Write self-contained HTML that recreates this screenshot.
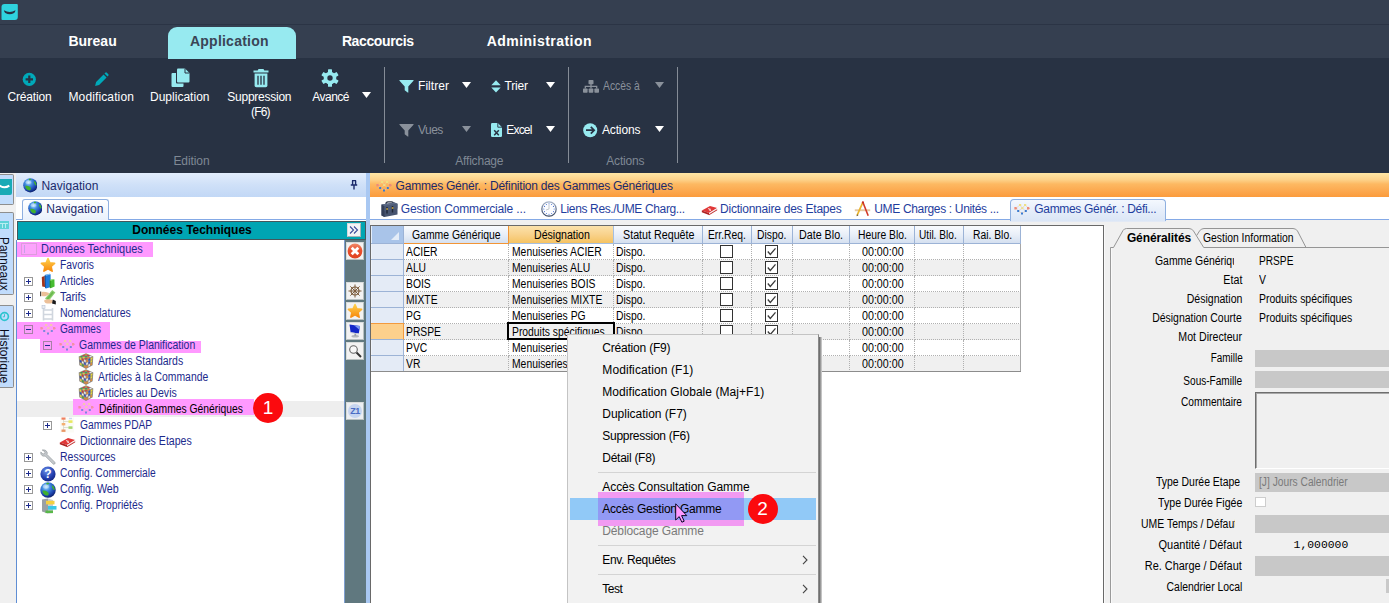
<!DOCTYPE html><html lang="fr"><head><meta charset="utf-8"><title>Gammes Génériques</title><style>
*{box-sizing:border-box;margin:0;padding:0}
html,body{width:1389px;height:603px;overflow:hidden;background:#fff}
body{position:relative;font-family:"Liberation Sans",sans-serif;font-size:12px;color:#000}
.a{position:absolute}
.t{position:absolute;white-space:nowrap}
.t span{display:inline-block;white-space:nowrap}
.sep{position:absolute;top:67px;height:96px;width:1px;background:#858c97}
.hl{position:absolute;background:#ff99ff}
.pm{position:absolute;width:9px;height:9px;border:1px solid #989898;background:#fff}
.pm:before{content:"";position:absolute;left:1px;top:3px;width:5px;height:1px;background:#1c2a8c}
.pm.m{background:#fb9dfb;border-color:#a680a6}
.pm.p:after{content:"";position:absolute;left:3px;top:1px;width:1px;height:5px;background:#1c2a8c}
.gh{position:absolute;top:226px;height:18px;border-right:1px solid #9cb3d6;border-bottom:1px solid #9cb3d6;background:linear-gradient(#f9fbfe,#e9eff8 50%,#d5e0f0)}
.gc{position:absolute;height:16px;border-right:1px dotted #b0b0b0;border-bottom:1px dotted #b0b0b0}
.rh{position:absolute;left:371px;width:33px;height:16px;box-shadow:inset 1px 0 0 #eff4fb;background:#e4ebf6;border-right:1px solid #9cb3d6;border-bottom:1px solid #9cb3d6}
.cb{position:absolute;width:13px;height:13px;border:1px solid #333;background:#fff}
.ff{position:absolute;left:1255px;width:134px;background:#c8c8c8}
.tbb{position:absolute;left:346px;width:18px;height:18px;background:#f2f2f2;border:1px solid #d8dcdc;border-right-color:#b8c0c0;border-bottom-color:#b8c0c0}
</style></head><body>
<div class="a" style="left:0;top:0;width:1389px;height:58px;background:#353f50"></div>
<div class="a" style="left:0;top:24px;width:1389px;height:1px;background:#2b3445"></div>
<div class="a" style="left:0;top:58px;width:1389px;height:115px;background:#283243"></div>
<svg class="a" style="left:1px;top:4px" width="18" height="17" viewBox="0 0 18 17"><g transform="translate(.5 0)"><path d="M3 0H15.3Q16.3 0 16.3 1V13Q16.3 16 13.3 16H1Q0 16 0 15V3Q0 0 3 0Z" fill="#2fd3df"/><path d="M2.4 6.2Q8.2 9.6 14 6.2Q13.6 8.2 12.6 8.9Q8.2 11.8 3.8 8.9Q2.8 8.2 2.4 6.2Z" fill="#283243"/></g></svg>
<div class="a" style="left:168px;top:27px;width:128px;height:32px;background:#97eaf0;border-radius:9px 9px 0 0"></div>
<div class="t" style="left:68.40px;top:33px;height:16px;line-height:16px;font-size:14px;font-weight:bold;color:#fff;"><span style="letter-spacing:0.011px;">Bureau</span></div>
<div class="t" style="left:190.00px;top:33px;height:16px;line-height:16px;font-size:14px;font-weight:bold;color:#3a4556;"><span style="letter-spacing:0.225px;">Application</span></div>
<div class="t" style="left:341.90px;top:33px;height:16px;line-height:16px;font-size:14px;font-weight:bold;color:#fff;"><span style="letter-spacing:-0.378px;">Raccourcis</span></div>
<div class="t" style="left:486.80px;top:33px;height:16px;line-height:16px;font-size:14px;font-weight:bold;color:#fff;"><span style="letter-spacing:0.451px;">Administration</span></div>
<div class="t" style="left:7.50px;top:90px;height:14px;line-height:14px;font-size:12px;color:#fff;"><span style="letter-spacing:-0.170px;">Création</span></div>
<div class="t" style="left:68.50px;top:90px;height:14px;line-height:14px;font-size:12px;color:#fff;"><span style="letter-spacing:0.122px;">Modification</span></div>
<div class="t" style="left:150.00px;top:90px;height:14px;line-height:14px;font-size:12px;color:#fff;"><span style="letter-spacing:0.012px;">Duplication</span></div>
<div class="t" style="left:227.30px;top:90px;height:14px;line-height:14px;font-size:12px;color:#fff;"><span style="letter-spacing:-0.247px;">Suppression</span></div>
<div class="t" style="left:251.00px;top:105px;height:14px;line-height:14px;font-size:12px;color:#fff;"><span style="letter-spacing:-0.849px;">(F6)</span></div>
<div class="t" style="left:312.30px;top:90px;height:14px;line-height:14px;font-size:12px;color:#fff;"><span style="letter-spacing:-0.518px;">Avancé</span></div>
<svg class="a" style="left:22px;top:72px" width="15" height="15" viewBox="0 0 15 15"><circle cx="7.3" cy="7.3" r="6.6" fill="#00a9b9"/><path d="M7.3 3.6V11M3.6 7.3H11" stroke="#283243" stroke-width="2.2"/></svg>
<svg class="a" style="left:93.5px;top:72px" width="15" height="15" viewBox="0 0 16 16"><path d="M1.2 14.8L2.2 10.6L10.2 2.6L13.4 5.8L5.4 13.8Z M11.2 1.6L12.3 0.6Q13 0 13.7 0.7L15.3 2.3Q16 3 15.4 3.7L14.4 4.8Z" fill="#00a9b9"/></svg>
<svg class="a" style="left:171px;top:68px" width="19" height="20" viewBox="0 0 19 20"><path d="M7 0.5H14L18.5 5V13.5Q18.5 14.5 17.5 14.5H7Q6 14.5 6 13.5V1.5Q6 0.5 7 0.5Z" fill="#97eaf0"/><path d="M14 0.5V5H18.5" fill="none" stroke="#283243" stroke-width="1"/><path d="M1.5 5H5V14.5Q5 15.5 6 15.5H12.5V18Q12.5 19 11.5 19H1.5Q0.5 19 0.5 18V6Q0.5 5 1.5 5Z" fill="#97eaf0"/></svg>
<svg class="a" style="left:252px;top:68px" width="18" height="20" viewBox="0 0 18 20"><path d="M6.5 1H11.5L12.3 2.4H16.5V4.4H1.5V2.4H5.7Z" fill="#97eaf0"/><path d="M2.6 5.6H15.4V17.5Q15.4 19.2 13.7 19.2H4.3Q2.6 19.2 2.6 17.5Z" fill="#97eaf0"/><path d="M6 7.8V16.8M9 7.8V16.8M12 7.8V16.8" stroke="#283243" stroke-width="1.3"/></svg>
<svg class="a" style="left:321px;top:69px" width="18" height="18" viewBox="0 0 18 18"><g transform="translate(9 9)" fill="#97eaf0"><circle r="6.3"/><rect x="-2" y="-8.8" width="4" height="5" rx=".6" transform="rotate(0)"/><rect x="-2" y="-8.8" width="4" height="5" rx=".6" transform="rotate(60)"/><rect x="-2" y="-8.8" width="4" height="5" rx=".6" transform="rotate(120)"/><rect x="-2" y="-8.8" width="4" height="5" rx=".6" transform="rotate(180)"/><rect x="-2" y="-8.8" width="4" height="5" rx=".6" transform="rotate(240)"/><rect x="-2" y="-8.8" width="4" height="5" rx=".6" transform="rotate(300)"/><circle r="2.7" fill="#283243"/></g></svg>
<svg class="a" style="left:362px;top:92px" width="9" height="6" viewBox="0 0 9 6"><path d="M0 0H9L4.5 6Z" fill="#fff"/></svg>
<div class="sep" style="left:384px"></div>
<div class="sep" style="left:568px"></div>
<div class="sep" style="left:677px"></div>
<div class="t" style="left:173.40px;top:154px;height:14px;line-height:14px;font-size:12px;color:#7f8894;"><span style="letter-spacing:-0.085px;">Edition</span></div>
<div class="t" style="left:455.30px;top:154px;height:14px;line-height:14px;font-size:12px;color:#7f8894;"><span style="letter-spacing:-0.202px;">Affichage</span></div>
<div class="t" style="left:606.30px;top:154px;height:14px;line-height:14px;font-size:12px;color:#7f8894;"><span style="letter-spacing:-0.193px;">Actions</span></div>
<div class="t" style="left:418.00px;top:79px;height:14px;line-height:14px;font-size:12px;color:#fff;"><span style="letter-spacing:0.048px;">Filtrer</span></div>
<div class="t" style="left:504.40px;top:79px;height:14px;line-height:14px;font-size:12px;color:#fff;"><span style="letter-spacing:-0.124px;">Trier</span></div>
<div class="t" style="left:603.00px;top:79px;height:14px;line-height:14px;font-size:12px;color:#8a919b;"><span style="transform:scaleX(0.8598);transform-origin:0 50%">Accès à</span></div>
<div class="t" style="left:418.00px;top:123px;height:14px;line-height:14px;font-size:12px;color:#8a919b;"><span style="letter-spacing:-0.552px;">Vues</span></div>
<div class="t" style="left:506.30px;top:123px;height:14px;line-height:14px;font-size:12px;color:#fff;"><span style="letter-spacing:-0.809px;">Excel</span></div>
<div class="t" style="left:601.90px;top:123px;height:14px;line-height:14px;font-size:12px;color:#fff;"><span style="letter-spacing:-0.122px;">Actions</span></div>
<svg class="a" style="left:462px;top:82px" width="9" height="6" viewBox="0 0 9 6"><path d="M0 0H9L4.5 6Z" fill="#fff"/></svg>
<svg class="a" style="left:546px;top:82px" width="9" height="6" viewBox="0 0 9 6"><path d="M0 0H9L4.5 6Z" fill="#fff"/></svg>
<svg class="a" style="left:655px;top:82px" width="9" height="6" viewBox="0 0 9 6"><path d="M0 0H9L4.5 6Z" fill="#8a919b"/></svg>
<svg class="a" style="left:462px;top:126px" width="9" height="6" viewBox="0 0 9 6"><path d="M0 0H9L4.5 6Z" fill="#8a919b"/></svg>
<svg class="a" style="left:546px;top:126px" width="9" height="6" viewBox="0 0 9 6"><path d="M0 0H9L4.5 6Z" fill="#fff"/></svg>
<svg class="a" style="left:655px;top:126px" width="9" height="6" viewBox="0 0 9 6"><path d="M0 0H9L4.5 6Z" fill="#fff"/></svg>
<svg class="a" style="left:399px;top:80px" width="15" height="13" viewBox="0 0 15 13"><path d="M0.8 0H14.2Q15 0 14.5 0.8L9.3 6.5V12.3Q9.3 13 8.7 12.6L6 10.6Q5.7 10.4 5.7 10V6.5L0.5 0.8Q0 0 0.8 0Z" fill="#97eaf0"/></svg>
<svg class="a" style="left:399px;top:124px" width="15" height="13" viewBox="0 0 15 13"><path d="M0.8 0H14.2Q15 0 14.5 0.8L9.3 6.5V12.3Q9.3 13 8.7 12.6L6 10.6Q5.7 10.4 5.7 10V6.5L0.5 0.8Q0 0 0.8 0Z" fill="#8a919b"/></svg>
<svg class="a" style="left:491px;top:80px" width="10" height="13" viewBox="0 0 10 13"><path d="M0.3 5.3L5 0.3L9.7 5.3ZM0.3 7.5L5 12.5L9.7 7.5Z" fill="#97eaf0"/></svg>
<svg class="a" style="left:583px;top:80px" width="16" height="13" viewBox="0 0 16 13"><g fill="#8a919b"><rect x="5.5" y="0" width="5" height="4.2" rx=".7"/><rect x="0" y="8.6" width="4.6" height="4.2" rx=".7"/><rect x="5.7" y="8.6" width="4.6" height="4.2" rx=".7"/><rect x="11.4" y="8.6" width="4.6" height="4.2" rx=".7"/></g><path d="M8 4V8.6M2.3 8.6V6.4H13.7V8.6" fill="none" stroke="#8a919b" stroke-width="1.3"/></svg>
<svg class="a" style="left:491px;top:123px" width="11" height="14" viewBox="0 0 11 14"><path d="M1.2 0H6.8L11 4.2V12.8Q11 14 9.8 14H1.2Q0 14 0 12.8V1.2Q0 0 1.2 0Z" fill="#97eaf0"/><path d="M6.8 0V4.2H11" fill="none" stroke="#283243" stroke-width=".9"/><path d="M3.2 7.2L7.8 12.2M7.8 7.2L3.2 12.2" stroke="#283243" stroke-width="1.5"/></svg>
<svg class="a" style="left:583px;top:123px" width="15" height="15" viewBox="0 0 15 15"><circle cx="7.2" cy="7.2" r="7" fill="#97eaf0"/><path d="M3 7.2H11M7.8 3.8L11.2 7.2L7.8 10.6" fill="none" stroke="#283243" stroke-width="1.7"/></svg>
<div class="a" style="left:0;top:173px;width:370px;height:430px;background:#a9c8f2"></div>
<div class="a" style="left:0;top:173px;width:16px;height:430px;background:#f0f0f0"></div>
<div class="a" style="left:0;top:174px;width:14px;height:31px;background:#c1dcfc;border:1px solid #8e8e8e;border-left:0;border-radius:0 2px 2px 0"></div>
<div class="a" style="left:0;top:179px;width:12px;height:16px;background:#18aab6;border-radius:0 0 2px 0"></div>
<svg class="a" style="left:0;top:179px" width="12" height="16"><path d="M-0.5 6.6Q4.5 10 9.3 6.6" stroke="#fff" stroke-width="2" fill="none"/></svg>
<div class="a" style="left:0;top:212px;width:14px;height:83px;background:#c1dcfc;border:1px solid #8e8e8e;border-left:0;border-radius:0 2px 2px 0"></div>
<div class="a" style="left:0;top:305px;width:14px;height:83px;background:#c1dcfc;border:1px solid #8e8e8e;border-left:0;border-radius:0 2px 2px 0"></div>
<div class="a" style="left:0;top:221px;width:9px;height:8px;background:#5fd2d8"></div><div class="a" style="left:0;top:223px;width:8px;height:1px;background:#b8eef0"></div><div class="a" style="left:2px;top:224px;width:1px;height:4px;background:#b8eef0"></div><div class="a" style="left:5px;top:224px;width:1px;height:4px;background:#b8eef0"></div>
<div class="t" style="left:10.6px;top:237.4px;transform:rotate(90deg) scaleX(0.9154);transform-origin:0 0;color:#080a18;font-size:13px;line-height:13px;height:13px">Panneaux</div>
<svg class="a" style="left:0;top:311px" width="10" height="11" viewBox="0 0 10 11"><circle cx="4.5" cy="5.5" r="3.9" fill="none" stroke="#2fc4cf" stroke-width="1.7"/><path d="M4.5 3.2V5.8H2.8" fill="none" stroke="#2fc4cf" stroke-width="1"/></svg>
<div class="t" style="left:10.6px;top:328.7px;transform:rotate(90deg) scaleX(0.9278);transform-origin:0 0;color:#080a18;font-size:13px;line-height:13px;height:13px">Historique</div>
<div class="a" style="left:16px;top:173px;width:350px;height:430px;background:#fff"></div><div class="a" style="left:16px;top:240px;width:1px;height:363px;background:#5f8ed4"></div>
<div class="a" style="left:16px;top:173px;width:350px;height:24px;background:linear-gradient(#e2edfc,#cfe0f8 50%,#c2d8f6)"></div>
<div class="t" style="left:41.40px;top:179px;height:14px;line-height:14px;font-size:12px;color:#1b2a6b;"><span style="letter-spacing:0.040px;">Navigation</span></div>
<div class="a" style="left:16px;top:219px;width:350px;height:1px;background:#84a9e6"></div>
<div class="a" style="left:22px;top:199px;width:87px;height:21px;background:linear-gradient(#fff,#e9f1fc);border:1px solid #8fb0e0;border-bottom:0;border-radius:3px 3px 0 0"></div>
<div class="t" style="left:46.20px;top:202px;height:14px;line-height:14px;font-size:12px;color:#1b2a6b;"><span style="letter-spacing:0.060px;">Navigation</span></div>
<svg class="a" style="left:22.7px;top:178.4px" width="14.6" height="14.6" viewBox="0 0 14 14"><defs><radialGradient id="gg1" cx=".38" cy=".3" r=".75"><stop offset="0" stop-color="#b8e4ff"/><stop offset=".35" stop-color="#3f8ae0"/><stop offset=".75" stop-color="#1a3fa8"/><stop offset="1" stop-color="#0a1c60"/></radialGradient></defs><circle cx="7" cy="7" r="6.8" fill="url(#gg1)"/><path d="M5.5 0.8Q7.5 0.3 8.2 1.2Q7.2 2.6 5.8 2.2ZM10.8 2.6Q12.8 4 13 6.8Q12 7.8 11.3 6Q10 4.2 10.8 2.6ZM2.2 7.5Q4.5 7 6.5 8.5Q8.5 10 7 11.8Q5 12.3 3.2 10.6Q2 9 2.2 7.5Z" fill="#3fb02e"/><ellipse cx="5.2" cy="4" rx="2.6" ry="1.8" fill="#fff" opacity=".35"/></svg>
<svg class="a" style="left:27.8px;top:201.3px" width="14.6" height="14.6" viewBox="0 0 14 14"><defs><radialGradient id="gg2" cx=".38" cy=".3" r=".75"><stop offset="0" stop-color="#b8e4ff"/><stop offset=".35" stop-color="#3f8ae0"/><stop offset=".75" stop-color="#1a3fa8"/><stop offset="1" stop-color="#0a1c60"/></radialGradient></defs><circle cx="7" cy="7" r="6.8" fill="url(#gg2)"/><path d="M5.5 0.8Q7.5 0.3 8.2 1.2Q7.2 2.6 5.8 2.2ZM10.8 2.6Q12.8 4 13 6.8Q12 7.8 11.3 6Q10 4.2 10.8 2.6ZM2.2 7.5Q4.5 7 6.5 8.5Q8.5 10 7 11.8Q5 12.3 3.2 10.6Q2 9 2.2 7.5Z" fill="#3fb02e"/><ellipse cx="5.2" cy="4" rx="2.6" ry="1.8" fill="#fff" opacity=".35"/></svg>
<svg class="a" style="left:350px;top:180px" width="8" height="10" viewBox="0 0 8 10"><path d="M2 0.5H6M2.6 0.5V5M5.6 0.5V5M0.8 5H7.2M4 5V9.5" stroke="#1b2a6b" stroke-width="1.4" fill="none"/></svg>
<div class="a" style="left:17px;top:221px;width:349px;height:19px;background:#00a5b3;border:1px solid #46575b"></div>
<div class="t" style="left:42.00px;width:300px;text-align:center;top:223px;height:14px;line-height:14px;font-size:12px;font-weight:bold;color:#000;"><span style="letter-spacing:-0.022px;">Données Techniques</span></div>
<div class="a" style="left:347px;top:223px;width:14px;height:14px;background:#f2f4f6;border:1px solid #d4dadc;border-right-color:#a8b4b6;border-bottom-color:#a8b4b6"></div>
<svg class="a" style="left:349px;top:226px" width="10" height="8" viewBox="0 0 10 8"><path d="M1 0.5L4.5 4L1 7.5M5 0.5L8.5 4L5 7.5" fill="none" stroke="#3a4a9a" stroke-width="1.1"/></svg>
<div class="a" style="left:344px;top:240px;width:22px;height:363px;background:#60787f"></div>
<div class="a" style="left:344px;top:240px;width:1px;height:363px;background:#7f9fd0"></div>
<div class="tbb" style="top:242px"></div><svg class="a" style="left:347px;top:243px" width="16" height="16" viewBox="0 0 16 16"><defs><linearGradient id="xg" x1="0" y1="0" x2="0" y2="1"><stop offset="0" stop-color="#f08a6a"/><stop offset=".45" stop-color="#e8502e"/><stop offset="1" stop-color="#e04422"/></linearGradient></defs><circle cx="8" cy="8" r="7.4" fill="url(#xg)"/><path d="M4.7 4.7L11.3 11.3M11.3 4.7L4.7 11.3" stroke="#fff" stroke-width="2.8"/></svg>
<div class="tbb" style="top:282px"></div><svg class="a" style="left:348px;top:284px" width="14" height="14" viewBox="0 0 14 14"><circle cx="7" cy="7" r="4" fill="none" stroke="#7a5a3a" stroke-width="1.2"/><path d="M7 0.5V13.5M0.5 7H13.5M2.4 2.4L11.6 11.6M11.6 2.4L2.4 11.6" stroke="#7a5a3a" stroke-width="1"/></svg>
<div class="tbb" style="top:302px"></div><svg class="a" style="left:347px;top:303px" width="16" height="16" viewBox="0 0 16 16"><defs><linearGradient id="sg2" x1="0" y1="0" x2="0" y2="1"><stop offset="0" stop-color="#ffd04a"/><stop offset="1" stop-color="#f78a0c"/></linearGradient></defs><path d="M8 1.6L9.9 5.9L14.6 6.4L11.1 9.5L12.1 14.1L8 11.7L3.9 14.1L4.9 9.5L1.4 6.4L6.1 5.9Z" fill="url(#sg2)" stroke="url(#sg2)" stroke-width="1.6" stroke-linejoin="round"/></svg>
<div class="tbb" style="top:322px"></div><svg class="a" style="left:348px;top:324px" width="14" height="14" viewBox="0 0 14 14"><path d="M1.5 0.5L12 2L10.8 9.6L2.6 8.2Z" fill="#1428c8"/><path d="M6 1.2L12 2L11.4 5.8Z" fill="#7a98f0"/><path d="M2.6 8.2L10.8 9.6L10.6 10.4L2.6 9Z" fill="#c8ccd4"/><ellipse cx="7.2" cy="12.2" rx="3.8" ry="1.3" fill="#b4b8bc"/><rect x="6.4" y="9.8" width="1.8" height="2" fill="#9ca0a8"/></svg>
<div class="tbb" style="top:342px"></div><svg class="a" style="left:348px;top:344px" width="14" height="14" viewBox="0 0 14 14"><circle cx="5.5" cy="5.5" r="3.8" fill="#f8f8f8" stroke="#666" stroke-width="1.1"/><path d="M8.5 8.5L13 13" stroke="#333" stroke-width="2"/></svg>
<div class="a" style="left:346px;top:402px;width:18px;height:18px;background:#eceef2;border:1px solid #d8dcdc;border-right-color:#b8c0c0;border-bottom-color:#b8c0c0"></div><div class="a" style="left:348px;top:404px;width:14px;height:14px;border-radius:50%;background:#c6d5f0"></div><div class="t" style="left:346px;top:405px;width:18px;text-align:center;font-size:9px;font-weight:bold;color:#4a6cc4;line-height:12px;letter-spacing:-.5px">Z1</div>
<div class="a" style="left:17px;top:401px;width:327px;height:16px;background:#eeeeee"></div>
<div class="hl" style="left:17px;top:242px;width:136px;height:15px"></div>
<div class="hl" style="left:17px;top:322px;width:93px;height:16.5px"></div>
<div class="hl" style="left:40px;top:338px;width:70px;height:4px"></div>
<div class="hl" style="left:40px;top:341px;width:161px;height:11.5px"></div>
<div class="hl" style="left:73px;top:399px;width:181px;height:16px"></div>
<div class="t" style="left:41.40px;top:242px;height:14px;line-height:14px;font-size:12px;color:#1c2a8c;"><span style="transform:scaleX(0.9100);transform-origin:0 50%">Données Techniques</span></div>
<div class="t" style="left:60.30px;top:258px;height:14px;line-height:14px;font-size:12px;color:#1c2a8c;"><span style="transform:scaleX(0.8617);transform-origin:0 50%">Favoris</span></div>
<div class="t" style="left:60.30px;top:274px;height:14px;line-height:14px;font-size:12px;color:#1c2a8c;"><span style="transform:scaleX(0.8617);transform-origin:0 50%">Articles</span></div>
<div class="pm p" style="left:24px;top:277px"></div>
<div class="t" style="left:60.30px;top:290px;height:14px;line-height:14px;font-size:12px;color:#1c2a8c;"><span style="transform:scaleX(0.9034);transform-origin:0 50%">Tarifs</span></div>
<div class="pm p" style="left:24px;top:293px"></div>
<div class="t" style="left:60.30px;top:306px;height:14px;line-height:14px;font-size:12px;color:#1c2a8c;"><span style="transform:scaleX(0.8785);transform-origin:0 50%">Nomenclatures</span></div>
<div class="pm p" style="left:24px;top:309px"></div>
<div class="t" style="left:60.30px;top:322px;height:14px;line-height:14px;font-size:12px;color:#1c2a8c;"><span style="transform:scaleX(0.8423);transform-origin:0 50%">Gammes</span></div>
<div class="pm m" style="left:24px;top:325px"></div>
<div class="t" style="left:79.30px;top:338px;height:14px;line-height:14px;font-size:12px;color:#1c2a8c;"><span style="transform:scaleX(0.8711);transform-origin:0 50%">Gammes de Planification</span></div>
<div class="pm m" style="left:43px;top:341px"></div>
<div class="t" style="left:98.00px;top:354px;height:14px;line-height:14px;font-size:12px;color:#1c2a8c;"><span style="transform:scaleX(0.8749);transform-origin:0 50%">Articles Standards</span></div>
<div class="t" style="left:98.00px;top:370px;height:14px;line-height:14px;font-size:12px;color:#1c2a8c;"><span style="transform:scaleX(0.8651);transform-origin:0 50%">Articles à la Commande</span></div>
<div class="t" style="left:98.00px;top:386px;height:14px;line-height:14px;font-size:12px;color:#1c2a8c;"><span style="transform:scaleX(0.8818);transform-origin:0 50%">Articles au Devis</span></div>
<div class="t" style="left:99.00px;top:402px;height:14px;line-height:14px;font-size:12px;color:#000;"><span style="transform:scaleX(0.8590);transform-origin:0 50%">Définition Gammes Génériques</span></div>
<div class="t" style="left:79.50px;top:418px;height:14px;line-height:14px;font-size:12px;color:#1c2a8c;"><span style="transform:scaleX(0.8525);transform-origin:0 50%">Gammes PDAP</span></div>
<div class="pm p" style="left:43px;top:421px"></div>
<div class="t" style="left:79.50px;top:434px;height:14px;line-height:14px;font-size:12px;color:#1c2a8c;"><span style="transform:scaleX(0.8821);transform-origin:0 50%">Dictionnaire des Etapes</span></div>
<div class="t" style="left:60.30px;top:450px;height:14px;line-height:14px;font-size:12px;color:#1c2a8c;"><span style="transform:scaleX(0.8760);transform-origin:0 50%">Ressources</span></div>
<div class="pm p" style="left:24px;top:453px"></div>
<div class="t" style="left:60.30px;top:466px;height:14px;line-height:14px;font-size:12px;color:#1c2a8c;"><span style="transform:scaleX(0.8550);transform-origin:0 50%">Config. Commerciale</span></div>
<div class="pm p" style="left:24px;top:469px"></div>
<div class="t" style="left:60.30px;top:482px;height:14px;line-height:14px;font-size:12px;color:#1c2a8c;"><span style="transform:scaleX(0.8934);transform-origin:0 50%">Config. Web</span></div>
<div class="pm p" style="left:24px;top:485px"></div>
<div class="t" style="left:60.30px;top:498px;height:14px;line-height:14px;font-size:12px;color:#1c2a8c;"><span style="transform:scaleX(0.8631);transform-origin:0 50%">Config. Propriétés</span></div>
<div class="pm p" style="left:24px;top:501px"></div>
<div class="a" style="left:21px;top:243px;width:16px;height:12px;border:1px solid #dc9cdc;background:#fca4fc"></div><div class="a" style="left:24px;top:245px;width:1px;height:8px;background:#c8a0e8"></div>
<svg class="a" style="left:40px;top:257px" width="16" height="16" viewBox="0 0 16 16"><defs><linearGradient id="sg" x1="0" y1="0" x2="0" y2="1"><stop offset="0" stop-color="#ffd04a"/><stop offset="1" stop-color="#f78a0c"/></linearGradient></defs><path d="M8 1.6L9.9 5.9L14.6 6.4L11.1 9.5L12.1 14.1L8 11.7L3.9 14.1L4.9 9.5L1.4 6.4L6.1 5.9Z" fill="url(#sg)" stroke="url(#sg)" stroke-width="1.6" stroke-linejoin="round"/></svg>
<svg class="a" style="left:40px;top:273px" width="16" height="16" viewBox="0 0 16 16"><path d="M1.8 4L4.6 3L5 14L2.2 13.4Z" fill="#a43418"/><path d="M4.6 3L5.6 3.2L6 14.6L5 14Z" fill="#7a2410"/><path d="M4.8 2L9.6 0.8L10.6 1.4L10.8 14L6 15.4L5 14.6Z" fill="#1f7cdc"/><path d="M4.8 2L9.6 0.8L10.6 1.4L5.8 2.8Z" fill="#8cc4f4"/><path d="M4.8 2L5.8 2.8L6 15.4L5 14.6Z" fill="#1458a8"/><path d="M9.8 7L13.6 6L14.4 6.6L14.6 13.6L10.6 15.2L9.8 14.4Z" fill="#46bc30"/><path d="M9.8 7L13.6 6L14.4 6.6L10.6 7.8Z" fill="#a4e48c"/><path d="M9.8 7L10.6 7.8V15.2L9.8 14.4Z" fill="#2a8a1c"/></svg>
<svg class="a" style="left:39px;top:289px" width="18" height="16" viewBox="0 0 18 16"><path d="M6 9.6L13.2 1L16.4 3.6L9.4 12.2Z" fill="#8cd070"/><path d="M7.6 9.4L13.4 2.6L14.8 3.8L9.2 10.6Z" fill="#6cb850"/><path d="M1.2 2.4H2.2V7.2H1.2Z" fill="#1a1a1a"/><path d="M2.4 3Q5.6 2.4 9.6 3.8Q10.6 5 9.6 5.8Q8 6.6 6.4 7.2Q4 7.6 2.4 6.8Z" fill="#ecc098"/><path d="M5.4 11Q8.4 9.6 11.8 10.6L14 11.6L13.2 14Q9.6 15 6.4 14Q4.6 12.6 5.4 11Z" fill="#ecc098"/><path d="M13.8 10.6L16.8 12V15.4L13 14.6Z" fill="#1a1a1a"/></svg>
<svg class="a" style="left:40px;top:305px" width="16" height="16" viewBox="0 0 16 16"><path d="M3.5 1V15.5M12.5 3V15.5M3.5 5H12.5M3.5 9.5H12.5M3.5 14H12.5" fill="none" stroke="#d0d6de" stroke-width="1.6"/><rect x="2" y="0.5" width="3" height="3" fill="#e8ecf2" stroke="#b8c4d4" stroke-width=".6"/></svg>
<svg class="a" style="left:40px;top:324px;opacity:0.65" width="16" height="11" viewBox="0 0 16 11"><path d="M2 4.2L6 1L8.3 4.2L11 1L14.5 4.2L11.8 7L8 9.5L4.2 7ZM4.2 7L8.3 4.2L11.8 7" fill="none" stroke="#ecc9a6" stroke-width=".6"/><path d="M0.4 3.1H2.2L3.3 4.2L2.2 5.4H0.4Z" fill="#ee8c78"/><path d="M13 3.1H14.8L15.9 4.2L14.8 5.4H13Z" fill="#ee8c78"/><rect x="5" y="0" width="2.2" height="2" fill="#f0e084"/><rect x="10" y="0" width="2.2" height="2" fill="#f0e084"/><rect x="7.2" y="3.2" width="2.2" height="1.9" fill="#ece08c"/><rect x="3.2" y="6" width="2" height="2" fill="#3a7ad0"/><rect x="10.8" y="6" width="2" height="2" fill="#3a7ad0"/><rect x="7" y="8.5" width="2" height="2" fill="#3a7ad0"/></svg>
<svg class="a" style="left:59px;top:340px;opacity:0.65" width="16" height="11" viewBox="0 0 16 11"><path d="M2 4.2L6 1L8.3 4.2L11 1L14.5 4.2L11.8 7L8 9.5L4.2 7ZM4.2 7L8.3 4.2L11.8 7" fill="none" stroke="#ecc9a6" stroke-width=".6"/><path d="M0.4 3.1H2.2L3.3 4.2L2.2 5.4H0.4Z" fill="#ee8c78"/><path d="M13 3.1H14.8L15.9 4.2L14.8 5.4H13Z" fill="#ee8c78"/><rect x="5" y="0" width="2.2" height="2" fill="#f0e084"/><rect x="10" y="0" width="2.2" height="2" fill="#f0e084"/><rect x="7.2" y="3.2" width="2.2" height="1.9" fill="#ece08c"/><rect x="3.2" y="6" width="2" height="2" fill="#3a7ad0"/><rect x="10.8" y="6" width="2" height="2" fill="#3a7ad0"/><rect x="7" y="8.5" width="2" height="2" fill="#3a7ad0"/></svg>
<svg class="a" style="left:78px;top:403px;opacity:0.65" width="16" height="11" viewBox="0 0 16 11"><path d="M2 4.2L6 1L8.3 4.2L11 1L14.5 4.2L11.8 7L8 9.5L4.2 7ZM4.2 7L8.3 4.2L11.8 7" fill="none" stroke="#ecc9a6" stroke-width=".6"/><path d="M0.4 3.1H2.2L3.3 4.2L2.2 5.4H0.4Z" fill="#ee8c78"/><path d="M13 3.1H14.8L15.9 4.2L14.8 5.4H13Z" fill="#ee8c78"/><rect x="5" y="0" width="2.2" height="2" fill="#f0e084"/><rect x="10" y="0" width="2.2" height="2" fill="#f0e084"/><rect x="7.2" y="3.2" width="2.2" height="1.9" fill="#ece08c"/><rect x="3.2" y="6" width="2" height="2" fill="#3a7ad0"/><rect x="10.8" y="6" width="2" height="2" fill="#3a7ad0"/><rect x="7" y="8.5" width="2" height="2" fill="#3a7ad0"/></svg>
<svg class="a" style="left:78px;top:353px" width="16" height="16" viewBox="0 0 16 16"><path d="M8 0.2L15.3 3.4L14.7 12.3L8 16L1.3 12.3L0.7 3.4Z" fill="#8f8880"/><path d="M1.93 3.62L3.47 2.93L5.01 3.66L3.47 4.36Z" fill="#3aa83a"/><path d="M4.19 2.61L5.73 1.93L7.27 2.63L5.73 3.33Z" fill="#d83a30"/><path d="M6.46 1.60L8.00 0.92L9.54 1.60L8.00 2.30Z" fill="#ee8a2a"/><path d="M4.19 4.71L5.73 4.00L7.27 4.73L5.73 5.45Z" fill="#e8dc30"/><path d="M6.46 3.67L8.00 2.96L9.54 3.67L8.00 4.39Z" fill="#3aa83a"/><path d="M8.73 2.63L10.27 1.93L11.81 2.61L10.27 3.33Z" fill="#d83a30"/><path d="M6.46 5.80L8.00 5.08L9.54 5.80L8.00 6.55Z" fill="#d83a30"/><path d="M8.73 4.73L10.27 4.00L11.81 4.71L10.27 5.45Z" fill="#ee8a2a"/><path d="M10.99 3.66L12.53 2.93L14.07 3.62L12.53 4.36Z" fill="#f2f2f4"/><path d="M1.59 4.22L3.13 4.98L3.22 6.90L1.72 6.13Z" fill="#e8dc30"/><path d="M3.85 5.33L5.38 6.08L5.44 8.03L3.93 7.26Z" fill="#d83a30"/><path d="M6.10 6.44L7.64 7.19L7.65 9.16L6.14 8.39Z" fill="#f2f2f4"/><path d="M1.78 7.03L3.27 7.80L3.37 9.73L1.91 8.94Z" fill="#2c4cc8"/><path d="M3.97 8.17L5.46 8.94L5.51 10.89L4.06 10.10Z" fill="#f2f2f4"/><path d="M6.16 9.31L7.65 10.08L7.66 12.05L6.20 11.26Z" fill="#2c4cc8"/><path d="M1.97 9.84L3.42 10.63L3.51 12.56L2.10 11.74Z" fill="#e8dc30"/><path d="M4.09 11.01L5.54 11.80L5.59 13.75L4.18 12.94Z" fill="#3aa83a"/><path d="M6.22 12.18L7.66 12.98L7.67 14.94L6.26 14.13Z" fill="#ee8a2a"/><path d="M8.36 7.19L9.90 6.44L9.86 8.39L8.35 9.16Z" fill="#ee8a2a"/><path d="M10.62 6.08L12.15 5.33L12.07 7.26L10.56 8.03Z" fill="#2c4cc8"/><path d="M12.87 4.98L14.41 4.22L14.28 6.13L12.78 6.90Z" fill="#e8dc30"/><path d="M8.35 10.08L9.84 9.31L9.80 11.26L8.34 12.05Z" fill="#f2f2f4"/><path d="M10.54 8.94L12.03 8.17L11.94 10.10L10.49 10.89Z" fill="#2c4cc8"/><path d="M12.73 7.80L14.22 7.03L14.09 8.94L12.63 9.73Z" fill="#e8dc30"/><path d="M8.34 12.98L9.78 12.18L9.74 14.13L8.33 14.94Z" fill="#ee8a2a"/><path d="M10.46 11.80L11.91 11.01L11.82 12.94L10.41 13.75Z" fill="#f2f2f4"/><path d="M12.58 10.63L14.03 9.84L13.90 11.74L12.49 12.56Z" fill="#ee8a2a"/></svg>
<svg class="a" style="left:78px;top:369px" width="16" height="16" viewBox="0 0 16 16"><path d="M8 0.2L15.3 3.4L14.7 12.3L8 16L1.3 12.3L0.7 3.4Z" fill="#8f8880"/><path d="M1.93 3.62L3.47 2.93L5.01 3.66L3.47 4.36Z" fill="#3aa83a"/><path d="M4.19 2.61L5.73 1.93L7.27 2.63L5.73 3.33Z" fill="#d83a30"/><path d="M6.46 1.60L8.00 0.92L9.54 1.60L8.00 2.30Z" fill="#ee8a2a"/><path d="M4.19 4.71L5.73 4.00L7.27 4.73L5.73 5.45Z" fill="#e8dc30"/><path d="M6.46 3.67L8.00 2.96L9.54 3.67L8.00 4.39Z" fill="#3aa83a"/><path d="M8.73 2.63L10.27 1.93L11.81 2.61L10.27 3.33Z" fill="#d83a30"/><path d="M6.46 5.80L8.00 5.08L9.54 5.80L8.00 6.55Z" fill="#d83a30"/><path d="M8.73 4.73L10.27 4.00L11.81 4.71L10.27 5.45Z" fill="#ee8a2a"/><path d="M10.99 3.66L12.53 2.93L14.07 3.62L12.53 4.36Z" fill="#f2f2f4"/><path d="M1.59 4.22L3.13 4.98L3.22 6.90L1.72 6.13Z" fill="#e8dc30"/><path d="M3.85 5.33L5.38 6.08L5.44 8.03L3.93 7.26Z" fill="#d83a30"/><path d="M6.10 6.44L7.64 7.19L7.65 9.16L6.14 8.39Z" fill="#f2f2f4"/><path d="M1.78 7.03L3.27 7.80L3.37 9.73L1.91 8.94Z" fill="#2c4cc8"/><path d="M3.97 8.17L5.46 8.94L5.51 10.89L4.06 10.10Z" fill="#f2f2f4"/><path d="M6.16 9.31L7.65 10.08L7.66 12.05L6.20 11.26Z" fill="#2c4cc8"/><path d="M1.97 9.84L3.42 10.63L3.51 12.56L2.10 11.74Z" fill="#e8dc30"/><path d="M4.09 11.01L5.54 11.80L5.59 13.75L4.18 12.94Z" fill="#3aa83a"/><path d="M6.22 12.18L7.66 12.98L7.67 14.94L6.26 14.13Z" fill="#ee8a2a"/><path d="M8.36 7.19L9.90 6.44L9.86 8.39L8.35 9.16Z" fill="#ee8a2a"/><path d="M10.62 6.08L12.15 5.33L12.07 7.26L10.56 8.03Z" fill="#2c4cc8"/><path d="M12.87 4.98L14.41 4.22L14.28 6.13L12.78 6.90Z" fill="#e8dc30"/><path d="M8.35 10.08L9.84 9.31L9.80 11.26L8.34 12.05Z" fill="#f2f2f4"/><path d="M10.54 8.94L12.03 8.17L11.94 10.10L10.49 10.89Z" fill="#2c4cc8"/><path d="M12.73 7.80L14.22 7.03L14.09 8.94L12.63 9.73Z" fill="#e8dc30"/><path d="M8.34 12.98L9.78 12.18L9.74 14.13L8.33 14.94Z" fill="#ee8a2a"/><path d="M10.46 11.80L11.91 11.01L11.82 12.94L10.41 13.75Z" fill="#f2f2f4"/><path d="M12.58 10.63L14.03 9.84L13.90 11.74L12.49 12.56Z" fill="#ee8a2a"/></svg>
<svg class="a" style="left:78px;top:385px" width="16" height="16" viewBox="0 0 16 16"><path d="M8 0.2L15.3 3.4L14.7 12.3L8 16L1.3 12.3L0.7 3.4Z" fill="#8f8880"/><path d="M1.93 3.62L3.47 2.93L5.01 3.66L3.47 4.36Z" fill="#3aa83a"/><path d="M4.19 2.61L5.73 1.93L7.27 2.63L5.73 3.33Z" fill="#d83a30"/><path d="M6.46 1.60L8.00 0.92L9.54 1.60L8.00 2.30Z" fill="#ee8a2a"/><path d="M4.19 4.71L5.73 4.00L7.27 4.73L5.73 5.45Z" fill="#e8dc30"/><path d="M6.46 3.67L8.00 2.96L9.54 3.67L8.00 4.39Z" fill="#3aa83a"/><path d="M8.73 2.63L10.27 1.93L11.81 2.61L10.27 3.33Z" fill="#d83a30"/><path d="M6.46 5.80L8.00 5.08L9.54 5.80L8.00 6.55Z" fill="#d83a30"/><path d="M8.73 4.73L10.27 4.00L11.81 4.71L10.27 5.45Z" fill="#ee8a2a"/><path d="M10.99 3.66L12.53 2.93L14.07 3.62L12.53 4.36Z" fill="#f2f2f4"/><path d="M1.59 4.22L3.13 4.98L3.22 6.90L1.72 6.13Z" fill="#e8dc30"/><path d="M3.85 5.33L5.38 6.08L5.44 8.03L3.93 7.26Z" fill="#d83a30"/><path d="M6.10 6.44L7.64 7.19L7.65 9.16L6.14 8.39Z" fill="#f2f2f4"/><path d="M1.78 7.03L3.27 7.80L3.37 9.73L1.91 8.94Z" fill="#2c4cc8"/><path d="M3.97 8.17L5.46 8.94L5.51 10.89L4.06 10.10Z" fill="#f2f2f4"/><path d="M6.16 9.31L7.65 10.08L7.66 12.05L6.20 11.26Z" fill="#2c4cc8"/><path d="M1.97 9.84L3.42 10.63L3.51 12.56L2.10 11.74Z" fill="#e8dc30"/><path d="M4.09 11.01L5.54 11.80L5.59 13.75L4.18 12.94Z" fill="#3aa83a"/><path d="M6.22 12.18L7.66 12.98L7.67 14.94L6.26 14.13Z" fill="#ee8a2a"/><path d="M8.36 7.19L9.90 6.44L9.86 8.39L8.35 9.16Z" fill="#ee8a2a"/><path d="M10.62 6.08L12.15 5.33L12.07 7.26L10.56 8.03Z" fill="#2c4cc8"/><path d="M12.87 4.98L14.41 4.22L14.28 6.13L12.78 6.90Z" fill="#e8dc30"/><path d="M8.35 10.08L9.84 9.31L9.80 11.26L8.34 12.05Z" fill="#f2f2f4"/><path d="M10.54 8.94L12.03 8.17L11.94 10.10L10.49 10.89Z" fill="#2c4cc8"/><path d="M12.73 7.80L14.22 7.03L14.09 8.94L12.63 9.73Z" fill="#e8dc30"/><path d="M8.34 12.98L9.78 12.18L9.74 14.13L8.33 14.94Z" fill="#ee8a2a"/><path d="M10.46 11.80L11.91 11.01L11.82 12.94L10.41 13.75Z" fill="#f2f2f4"/><path d="M12.58 10.63L14.03 9.84L13.90 11.74L12.49 12.56Z" fill="#ee8a2a"/></svg>
<svg class="a" style="left:59px;top:417px" width="16" height="16" viewBox="0 0 16 16"><rect x="1" y="0.5" width="14" height="15" fill="#fbfbf6"/><path d="M4.5 2V14M4.5 4.5H11M4.5 10.5H11" stroke="#d8d8c8" stroke-width=".8" fill="none"/><rect x="2.5" y="0.5" width="4" height="2.2" fill="#f08060"/><rect x="2.7" y="6" width="3.6" height="2.4" fill="#f4b070"/><rect x="2.5" y="12.5" width="4" height="2.4" fill="#e89868"/><rect x="9.5" y="3.3" width="4" height="2.6" fill="#e8e860"/><rect x="9.5" y="9.3" width="4" height="2.6" fill="#a8d870"/><rect x="10" y="0.8" width="3" height="1.4" fill="#c8d8f0"/></svg>
<svg class="a" style="left:59px;top:436px" width="17" height="12" viewBox="0 0 17 12"><path d="M0.8 6.5L9 2L16.2 4L8 9Z" fill="#e03838"/><path d="M0.8 6.5L8 9V11L0.8 8.3Z" fill="#b02020"/><path d="M8 9L16.2 4V6L8 11Z" fill="#f4f0f0"/><path d="M8 10.2L16.2 5.3V6.3L8 11.3Z" fill="#c02828"/><path d="M7 4.6L9.5 5.3L8.3 6L10 6.6" stroke="#fff" stroke-width=".8" fill="none"/></svg>
<svg class="a" style="left:40px;top:449px" width="16" height="16" viewBox="0 0 16 16"><path d="M2.2 1Q5.5 0.2 7 2.8Q7.6 4.2 7 5.4L14.8 13.2Q15.6 14.2 14.6 15Q13.7 15.7 12.9 14.8L5.2 7Q3.5 7.6 2 6.6Q0.3 5.2 0.8 3L3 5L4.8 4.4L5 2.8Z" fill="#c4c8cc" stroke="#8c9296" stroke-width=".6"/></svg>
<svg class="a" style="left:40px;top:466px" width="16" height="16" viewBox="0 0 16 16"><defs><radialGradient id="qg" cx=".4" cy=".3" r=".8"><stop offset="0" stop-color="#6a90e8"/><stop offset=".6" stop-color="#2440b0"/><stop offset="1" stop-color="#101c70"/></radialGradient></defs><circle cx="8" cy="8" r="7.6" fill="url(#qg)"/><text x="8" y="12.2" font-family="Liberation Sans, sans-serif" font-weight="bold" font-size="12" fill="#fff" text-anchor="middle">?</text></svg>
<svg class="a" style="left:40px;top:482px" width="16" height="16" viewBox="0 0 14 14"><defs><radialGradient id="gg3" cx=".38" cy=".3" r=".75"><stop offset="0" stop-color="#b8e4ff"/><stop offset=".35" stop-color="#3f8ae0"/><stop offset=".75" stop-color="#1a3fa8"/><stop offset="1" stop-color="#0a1c60"/></radialGradient></defs><circle cx="7" cy="7" r="6.8" fill="url(#gg3)"/><path d="M5.5 0.8Q7.5 0.3 8.2 1.2Q7.2 2.6 5.8 2.2ZM10.8 2.6Q12.8 4 13 6.8Q12 7.8 11.3 6Q10 4.2 10.8 2.6ZM2.2 7.5Q4.5 7 6.5 8.5Q8.5 10 7 11.8Q5 12.3 3.2 10.6Q2 9 2.2 7.5Z" fill="#3fb02e"/><ellipse cx="5.2" cy="4" rx="2.6" ry="1.8" fill="#fff" opacity=".35"/></svg>
<svg class="a" style="left:40px;top:498px" width="17" height="16" viewBox="0 0 17 16"><path d="M2 1.5L8 0.5V15.5L2 13.5Z" fill="#9aa0a6"/><path d="M8 0.5L13 2V15L8 15.5Z" fill="#c8ccd0"/><rect x="6" y="2.8" width="8.5" height="3.6" fill="#f4d040"/><rect x="8" y="8" width="8.5" height="3.6" fill="#38c8e8"/><rect x="5.5" y="12.5" width="7.5" height="2.6" fill="#58b848"/></svg>
<div class="a" style="left:370px;top:173px;width:1019px;height:24px;background:linear-gradient(#ffe7a6 0%,#fdd28a 28%,#fdb962 46%,#fcab52 70%,#fb9b3c 100%)"></div>
<svg class="a" style="left:376px;top:181px;opacity:1" width="16" height="11" viewBox="0 0 16 11"><path d="M2 4.2L6 1L8.3 4.2L11 1L14.5 4.2L11.8 7L8 9.5L4.2 7ZM4.2 7L8.3 4.2L11.8 7" fill="none" stroke="#ecc9a6" stroke-width=".6"/><path d="M0.4 3.1H2.2L3.3 4.2L2.2 5.4H0.4Z" fill="#ee8c78"/><path d="M13 3.1H14.8L15.9 4.2L14.8 5.4H13Z" fill="#ee8c78"/><rect x="5" y="0" width="2.2" height="2" fill="#f0e084"/><rect x="10" y="0" width="2.2" height="2" fill="#f0e084"/><rect x="7.2" y="3.2" width="2.2" height="1.9" fill="#ece08c"/><rect x="3.2" y="6" width="2" height="2" fill="#3a7ad0"/><rect x="10.8" y="6" width="2" height="2" fill="#3a7ad0"/><rect x="7" y="8.5" width="2" height="2" fill="#3a7ad0"/></svg>
<div class="t" style="left:395.60px;top:179px;height:14px;line-height:14px;font-size:12px;color:#1b2a6b;"><span style="letter-spacing:-0.228px;">Gammes Génér. : Définition des Gammes Génériques</span></div>
<div class="a" style="left:370px;top:197px;width:1019px;height:22px;background:#fff"></div>
<div class="a" style="left:370px;top:219px;width:1019px;height:1px;background:#84a9e6"></div>
<div class="a" style="left:370px;top:220px;width:1019px;height:383px;background:#f0f0f0"></div>
<div class="a" style="left:1010px;top:220px;width:156px;height:2px;background:#e2e9f5"></div>
<div class="a" style="left:1010px;top:199px;width:156px;height:22px;background:linear-gradient(#f4f8fe,#e6eefa 50%,#dbe6f6);border:1px solid #8fb0e0;border-bottom:0;border-radius:4px 4px 0 0"></div>
<div class="t" style="left:400.80px;top:202px;height:14px;line-height:14px;font-size:12px;color:#1f3e9e;"><span style="letter-spacing:-0.161px;">Gestion Commerciale ...</span></div>
<div class="t" style="left:560.20px;top:202px;height:14px;line-height:14px;font-size:12px;color:#1f3e9e;"><span style="letter-spacing:-0.353px;">Liens Res./UME Charg...</span></div>
<div class="t" style="left:720.00px;top:202px;height:14px;line-height:14px;font-size:12px;color:#1f3e9e;"><span style="letter-spacing:-0.228px;">Dictionnaire des Etapes</span></div>
<div class="t" style="left:874.30px;top:202px;height:14px;line-height:14px;font-size:12px;color:#1f3e9e;"><span style="letter-spacing:-0.346px;">UME Charges : Unités ...</span></div>
<div class="t" style="left:1034.30px;top:202px;height:14px;line-height:14px;font-size:12px;color:#1f3e9e;"><span style="letter-spacing:-0.321px;">Gammes Génér. : Défi...</span></div>
<svg class="a" style="left:1014px;top:204px;opacity:1" width="16" height="11" viewBox="0 0 16 11"><path d="M2 4.2L6 1L8.3 4.2L11 1L14.5 4.2L11.8 7L8 9.5L4.2 7ZM4.2 7L8.3 4.2L11.8 7" fill="none" stroke="#ecc9a6" stroke-width=".6"/><path d="M0.4 3.1H2.2L3.3 4.2L2.2 5.4H0.4Z" fill="#ee8c78"/><path d="M13 3.1H14.8L15.9 4.2L14.8 5.4H13Z" fill="#ee8c78"/><rect x="5" y="0" width="2.2" height="2" fill="#f0e084"/><rect x="10" y="0" width="2.2" height="2" fill="#f0e084"/><rect x="7.2" y="3.2" width="2.2" height="1.9" fill="#ece08c"/><rect x="3.2" y="6" width="2" height="2" fill="#3a7ad0"/><rect x="10.8" y="6" width="2" height="2" fill="#3a7ad0"/><rect x="7" y="8.5" width="2" height="2" fill="#3a7ad0"/></svg>
<svg class="a" style="left:380.5px;top:200.5px" width="17" height="17" viewBox="0 0 17 17"><path d="M5 3Q5 0.8 7 0.8H10.5Q12.5 0.8 12.5 3" fill="none" stroke="#2c3446" stroke-width="1.3"/><path d="M0.5 3.5L13.5 1.5L16.5 2.8V13.5L3.5 16L0.5 14.5Z" fill="#46536e"/><path d="M0.5 3.5L3.5 5V16L0.5 14.5Z" fill="#343f58"/><path d="M0.5 3.5L13.5 1.5L16.5 2.8L3.5 5Z" fill="#5c6a86"/><path d="M3.5 5L16.5 2.8V7.5L3.5 10Z" fill="#4e5c78"/><path d="M6 6V12.5M11.5 5V11.5" stroke="#1e2636" stroke-width="1.4"/><rect x="5.3" y="7.2" width="1.6" height="1.6" fill="#d0a838"/><rect x="10.8" y="6.2" width="1.6" height="1.6" fill="#d0a838"/></svg>
<svg class="a" style="left:541px;top:201px" width="16" height="16" viewBox="0 0 16 16"><defs><linearGradient id="ckg" x1="0" y1="0" x2="0" y2="1"><stop offset="0" stop-color="#a8b4c8"/><stop offset="1" stop-color="#36445e"/></linearGradient></defs><circle cx="8" cy="8" r="7.2" fill="#fbfcfe" stroke="url(#ckg)" stroke-width="1.3"/><circle cx="8.00" cy="2.80" r=".55" fill="#4a72d4"/><circle cx="10.60" cy="3.50" r=".55" fill="#4a72d4"/><circle cx="12.50" cy="5.40" r=".55" fill="#4a72d4"/><circle cx="13.20" cy="8.00" r=".55" fill="#4a72d4"/><circle cx="12.50" cy="10.60" r=".55" fill="#4a72d4"/><circle cx="10.60" cy="12.50" r=".55" fill="#4a72d4"/><circle cx="8.00" cy="13.20" r=".55" fill="#4a72d4"/><circle cx="5.40" cy="12.50" r=".55" fill="#4a72d4"/><circle cx="3.50" cy="10.60" r=".55" fill="#4a72d4"/><circle cx="2.80" cy="8.00" r=".55" fill="#4a72d4"/><circle cx="3.50" cy="5.40" r=".55" fill="#4a72d4"/><circle cx="5.40" cy="3.50" r=".55" fill="#4a72d4"/><path d="M8 8V3.4M8 8L5 9" stroke="#c4c8cc" stroke-width="1" fill="none"/></svg>
<svg class="a" style="left:700.5px;top:204px" width="17" height="12" viewBox="0 0 17 12"><path d="M0.8 6.5L9 2L16.2 4L8 9Z" fill="#e03838"/><path d="M0.8 6.5L8 9V11L0.8 8.3Z" fill="#b02020"/><path d="M8 9L16.2 4V6L8 11Z" fill="#f4f0f0"/><path d="M8 10.2L16.2 5.3V6.3L8 11.3Z" fill="#c02828"/><path d="M7 4.6L9.5 5.3L8.3 6L10 6.6" stroke="#fff" stroke-width=".8" fill="none"/></svg>
<svg class="a" style="left:854px;top:201px" width="17" height="16" viewBox="0 0 17 16"><path d="M0.8 8.3H16.2V10.2H0.8Z" fill="#e6c8a2"/><path d="M9 1L3 14.5" stroke="#eab530" stroke-width="1.8" fill="none"/><path d="M3.4 13.2L2.4 15.3L4.4 14.2Z" fill="#444"/><path d="M8.8 1L14.2 14.8" stroke="#d23a2a" stroke-width="1.6" fill="none"/><circle cx="8.9" cy="1.4" r="1.1" fill="#c83020"/></svg>
<div class="a" style="left:370px;top:225px;width:734px;height:380px;background:#fff;border:1px solid #696969"></div>
<div class="a" style="left:371px;top:226px;width:33px;height:18px;box-shadow:inset 1px 0 0 #e4eefb;background:#a9c4e9;border-right:1px solid #9cb3d6;border-bottom:1px solid #9cb3d6"></div>
<svg class="a" style="left:391px;top:232px" width="8" height="8"><path d="M8 0V8H0Z" fill="#e3ecf8"/></svg>
<div class="gh" style="left:404px;width:105px;border-bottom-color:#f29536;border-right-color:#f29536;"></div>
<div class="t" style="left:412.40px;top:228px;height:14px;line-height:14px;font-size:12px;color:#000;"><span style="transform:scaleX(0.8682);transform-origin:0 50%">Gamme Générique</span></div>
<div class="gh" style="left:509px;width:105px;background:linear-gradient(#fbe2ac,#f9d28c 50%,#f5c362);border-right-color:#a5bfe1;border-bottom-color:#a5bfe1;"></div>
<div class="t" style="left:533.50px;top:228px;height:14px;line-height:14px;font-size:12px;color:#000;"><span style="transform:scaleX(0.8820);transform-origin:0 50%">Désignation</span></div>
<div class="gh" style="left:614px;width:89px;"></div>
<div class="t" style="left:622.80px;top:228px;height:14px;line-height:14px;font-size:12px;color:#000;"><span style="transform:scaleX(0.8931);transform-origin:0 50%">Statut Requête</span></div>
<div class="gh" style="left:703px;width:49px;"></div>
<div class="t" style="left:707.50px;top:228px;height:14px;line-height:14px;font-size:12px;color:#000;"><span style="transform:scaleX(0.8587);transform-origin:0 50%">Err.Req.</span></div>
<div class="gh" style="left:752px;width:41px;"></div>
<div class="t" style="left:756.50px;top:228px;height:14px;line-height:14px;font-size:12px;color:#000;"><span style="transform:scaleX(0.8614);transform-origin:0 50%">Dispo.</span></div>
<div class="gh" style="left:793px;width:57px;"></div>
<div class="t" style="left:799.00px;top:228px;height:14px;line-height:14px;font-size:12px;color:#000;"><span style="transform:scaleX(0.8934);transform-origin:0 50%">Date Blo.</span></div>
<div class="gh" style="left:850px;width:65px;"></div>
<div class="t" style="left:857.90px;top:228px;height:14px;line-height:14px;font-size:12px;color:#000;"><span style="transform:scaleX(0.8607);transform-origin:0 50%">Heure Blo.</span></div>
<div class="gh" style="left:915px;width:49px;"></div>
<div class="t" style="left:919.40px;top:228px;height:14px;line-height:14px;font-size:12px;color:#000;"><span style="transform:scaleX(0.8438);transform-origin:0 50%">Util. Blo.</span></div>
<div class="gh" style="left:964px;width:57px;"></div>
<div class="t" style="left:972.50px;top:228px;height:14px;line-height:14px;font-size:12px;color:#000;"><span style="transform:scaleX(0.8599);transform-origin:0 50%">Rai. Blo.</span></div>
<div class="a" style="left:404px;top:244px;width:617px;height:16px;background:#fff"></div>
<div class="rh" style="top:244px;"></div>
<div class="gc" style="left:404px;top:244px;width:105px"></div>
<div class="gc" style="left:509px;top:244px;width:105px"></div>
<div class="gc" style="left:614px;top:244px;width:89px"></div>
<div class="gc" style="left:703px;top:244px;width:49px"></div>
<div class="gc" style="left:752px;top:244px;width:41px"></div>
<div class="gc" style="left:793px;top:244px;width:57px"></div>
<div class="gc" style="left:850px;top:244px;width:65px"></div>
<div class="gc" style="left:915px;top:244px;width:49px"></div>
<div class="gc" style="left:964px;top:244px;width:57px"></div>
<div class="t" style="left:406.20px;top:245px;height:14px;line-height:14px;font-size:12px;color:#000;"><span style="transform:scaleX(0.8600);transform-origin:0 50%">ACIER</span></div>
<div class="t" style="left:511.50px;top:245px;height:14px;line-height:14px;font-size:12px;color:#000;"><span style="transform:scaleX(0.8625);transform-origin:0 50%">Menuiseries ACIER</span></div>
<div class="t" style="left:616.00px;top:245px;height:14px;line-height:14px;font-size:12px;color:#000;"><span style="transform:scaleX(0.8643);transform-origin:0 50%">Dispo.</span></div>
<div class="t" style="left:861.70px;top:245px;height:14px;line-height:14px;font-size:12px;color:#000;"><span style="transform:scaleX(0.8906);transform-origin:0 50%">00:00:00</span></div>
<div class="cb" style="left:720px;top:245px"></div>
<div class="cb" style="left:765px;top:245px"></div><svg class="a" style="left:765px;top:245px" width="13" height="13"><path d="M2.8 6.5L5.3 9.5L10.5 3.3" fill="none" stroke="#3a3a3a" stroke-width="1.3"/></svg>
<div class="a" style="left:404px;top:260px;width:617px;height:16px;background:#f0f0f0"></div>
<div class="rh" style="top:260px;"></div>
<div class="gc" style="left:404px;top:260px;width:105px"></div>
<div class="gc" style="left:509px;top:260px;width:105px"></div>
<div class="gc" style="left:614px;top:260px;width:89px"></div>
<div class="gc" style="left:703px;top:260px;width:49px"></div>
<div class="gc" style="left:752px;top:260px;width:41px"></div>
<div class="gc" style="left:793px;top:260px;width:57px"></div>
<div class="gc" style="left:850px;top:260px;width:65px"></div>
<div class="gc" style="left:915px;top:260px;width:49px"></div>
<div class="gc" style="left:964px;top:260px;width:57px"></div>
<div class="t" style="left:406.20px;top:261px;height:14px;line-height:14px;font-size:12px;color:#000;"><span style="transform:scaleX(0.8600);transform-origin:0 50%">ALU</span></div>
<div class="t" style="left:511.50px;top:261px;height:14px;line-height:14px;font-size:12px;color:#000;"><span style="transform:scaleX(0.8625);transform-origin:0 50%">Menuiseries ALU</span></div>
<div class="t" style="left:616.00px;top:261px;height:14px;line-height:14px;font-size:12px;color:#000;"><span style="transform:scaleX(0.8643);transform-origin:0 50%">Dispo.</span></div>
<div class="t" style="left:861.70px;top:261px;height:14px;line-height:14px;font-size:12px;color:#000;"><span style="transform:scaleX(0.8906);transform-origin:0 50%">00:00:00</span></div>
<div class="cb" style="left:720px;top:261px"></div>
<div class="cb" style="left:765px;top:261px"></div><svg class="a" style="left:765px;top:261px" width="13" height="13"><path d="M2.8 6.5L5.3 9.5L10.5 3.3" fill="none" stroke="#3a3a3a" stroke-width="1.3"/></svg>
<div class="a" style="left:404px;top:276px;width:617px;height:16px;background:#fff"></div>
<div class="rh" style="top:276px;"></div>
<div class="gc" style="left:404px;top:276px;width:105px"></div>
<div class="gc" style="left:509px;top:276px;width:105px"></div>
<div class="gc" style="left:614px;top:276px;width:89px"></div>
<div class="gc" style="left:703px;top:276px;width:49px"></div>
<div class="gc" style="left:752px;top:276px;width:41px"></div>
<div class="gc" style="left:793px;top:276px;width:57px"></div>
<div class="gc" style="left:850px;top:276px;width:65px"></div>
<div class="gc" style="left:915px;top:276px;width:49px"></div>
<div class="gc" style="left:964px;top:276px;width:57px"></div>
<div class="t" style="left:406.20px;top:277px;height:14px;line-height:14px;font-size:12px;color:#000;"><span style="transform:scaleX(0.8600);transform-origin:0 50%">BOIS</span></div>
<div class="t" style="left:511.50px;top:277px;height:14px;line-height:14px;font-size:12px;color:#000;"><span style="transform:scaleX(0.8625);transform-origin:0 50%">Menuiseries BOIS</span></div>
<div class="t" style="left:616.00px;top:277px;height:14px;line-height:14px;font-size:12px;color:#000;"><span style="transform:scaleX(0.8643);transform-origin:0 50%">Dispo.</span></div>
<div class="t" style="left:861.70px;top:277px;height:14px;line-height:14px;font-size:12px;color:#000;"><span style="transform:scaleX(0.8906);transform-origin:0 50%">00:00:00</span></div>
<div class="cb" style="left:720px;top:277px"></div>
<div class="cb" style="left:765px;top:277px"></div><svg class="a" style="left:765px;top:277px" width="13" height="13"><path d="M2.8 6.5L5.3 9.5L10.5 3.3" fill="none" stroke="#3a3a3a" stroke-width="1.3"/></svg>
<div class="a" style="left:404px;top:292px;width:617px;height:16px;background:#f0f0f0"></div>
<div class="rh" style="top:292px;"></div>
<div class="gc" style="left:404px;top:292px;width:105px"></div>
<div class="gc" style="left:509px;top:292px;width:105px"></div>
<div class="gc" style="left:614px;top:292px;width:89px"></div>
<div class="gc" style="left:703px;top:292px;width:49px"></div>
<div class="gc" style="left:752px;top:292px;width:41px"></div>
<div class="gc" style="left:793px;top:292px;width:57px"></div>
<div class="gc" style="left:850px;top:292px;width:65px"></div>
<div class="gc" style="left:915px;top:292px;width:49px"></div>
<div class="gc" style="left:964px;top:292px;width:57px"></div>
<div class="t" style="left:406.20px;top:293px;height:14px;line-height:14px;font-size:12px;color:#000;"><span style="transform:scaleX(0.8600);transform-origin:0 50%">MIXTE</span></div>
<div class="t" style="left:511.50px;top:293px;height:14px;line-height:14px;font-size:12px;color:#000;"><span style="transform:scaleX(0.8625);transform-origin:0 50%">Menuiseries MIXTE</span></div>
<div class="t" style="left:616.00px;top:293px;height:14px;line-height:14px;font-size:12px;color:#000;"><span style="transform:scaleX(0.8643);transform-origin:0 50%">Dispo.</span></div>
<div class="t" style="left:861.70px;top:293px;height:14px;line-height:14px;font-size:12px;color:#000;"><span style="transform:scaleX(0.8906);transform-origin:0 50%">00:00:00</span></div>
<div class="cb" style="left:720px;top:293px"></div>
<div class="cb" style="left:765px;top:293px"></div><svg class="a" style="left:765px;top:293px" width="13" height="13"><path d="M2.8 6.5L5.3 9.5L10.5 3.3" fill="none" stroke="#3a3a3a" stroke-width="1.3"/></svg>
<div class="a" style="left:404px;top:308px;width:617px;height:16px;background:#fff"></div>
<div class="rh" style="top:308px;"></div>
<div class="gc" style="left:404px;top:308px;width:105px"></div>
<div class="gc" style="left:509px;top:308px;width:105px"></div>
<div class="gc" style="left:614px;top:308px;width:89px"></div>
<div class="gc" style="left:703px;top:308px;width:49px"></div>
<div class="gc" style="left:752px;top:308px;width:41px"></div>
<div class="gc" style="left:793px;top:308px;width:57px"></div>
<div class="gc" style="left:850px;top:308px;width:65px"></div>
<div class="gc" style="left:915px;top:308px;width:49px"></div>
<div class="gc" style="left:964px;top:308px;width:57px"></div>
<div class="t" style="left:406.20px;top:309px;height:14px;line-height:14px;font-size:12px;color:#000;"><span style="transform:scaleX(0.8600);transform-origin:0 50%">PG</span></div>
<div class="t" style="left:511.50px;top:309px;height:14px;line-height:14px;font-size:12px;color:#000;"><span style="transform:scaleX(0.8625);transform-origin:0 50%">Menuiseries PG</span></div>
<div class="t" style="left:616.00px;top:309px;height:14px;line-height:14px;font-size:12px;color:#000;"><span style="transform:scaleX(0.8643);transform-origin:0 50%">Dispo.</span></div>
<div class="t" style="left:861.70px;top:309px;height:14px;line-height:14px;font-size:12px;color:#000;"><span style="transform:scaleX(0.8906);transform-origin:0 50%">00:00:00</span></div>
<div class="cb" style="left:720px;top:309px"></div>
<div class="cb" style="left:765px;top:309px"></div><svg class="a" style="left:765px;top:309px" width="13" height="13"><path d="M2.8 6.5L5.3 9.5L10.5 3.3" fill="none" stroke="#3a3a3a" stroke-width="1.3"/></svg>
<div class="a" style="left:404px;top:324px;width:617px;height:16px;background:#f0f0f0"></div>
<div class="rh" style="top:324px;background:#fdd08c;border-right-color:#f39a3e;box-shadow:0 -1px 0 #f39a3e;"></div>
<div class="gc" style="left:404px;top:324px;width:105px"></div>
<div class="gc" style="left:509px;top:324px;width:105px"></div>
<div class="gc" style="left:614px;top:324px;width:89px"></div>
<div class="gc" style="left:703px;top:324px;width:49px"></div>
<div class="gc" style="left:752px;top:324px;width:41px"></div>
<div class="gc" style="left:793px;top:324px;width:57px"></div>
<div class="gc" style="left:850px;top:324px;width:65px"></div>
<div class="gc" style="left:915px;top:324px;width:49px"></div>
<div class="gc" style="left:964px;top:324px;width:57px"></div>
<div class="t" style="left:406.20px;top:325px;height:14px;line-height:14px;font-size:12px;color:#000;"><span style="transform:scaleX(0.8600);transform-origin:0 50%">PRSPE</span></div>
<div class="t" style="left:511.50px;top:325px;height:14px;line-height:14px;font-size:12px;color:#000;"><span style="transform:scaleX(0.8625);transform-origin:0 50%">Produits spécifiques</span></div>
<div class="t" style="left:616.00px;top:325px;height:14px;line-height:14px;font-size:12px;color:#000;"><span style="transform:scaleX(0.8643);transform-origin:0 50%">Dispo.</span></div>
<div class="t" style="left:861.70px;top:325px;height:14px;line-height:14px;font-size:12px;color:#000;"><span style="transform:scaleX(0.8906);transform-origin:0 50%">00:00:00</span></div>
<div class="cb" style="left:720px;top:325px"></div>
<div class="cb" style="left:765px;top:325px"></div><svg class="a" style="left:765px;top:325px" width="13" height="13"><path d="M2.8 6.5L5.3 9.5L10.5 3.3" fill="none" stroke="#3a3a3a" stroke-width="1.3"/></svg>
<div class="a" style="left:404px;top:340px;width:617px;height:16px;background:#fff"></div>
<div class="rh" style="top:340px;"></div>
<div class="gc" style="left:404px;top:340px;width:105px"></div>
<div class="gc" style="left:509px;top:340px;width:105px"></div>
<div class="gc" style="left:614px;top:340px;width:89px"></div>
<div class="gc" style="left:703px;top:340px;width:49px"></div>
<div class="gc" style="left:752px;top:340px;width:41px"></div>
<div class="gc" style="left:793px;top:340px;width:57px"></div>
<div class="gc" style="left:850px;top:340px;width:65px"></div>
<div class="gc" style="left:915px;top:340px;width:49px"></div>
<div class="gc" style="left:964px;top:340px;width:57px"></div>
<div class="t" style="left:406.20px;top:341px;height:14px;line-height:14px;font-size:12px;color:#000;"><span style="transform:scaleX(0.8600);transform-origin:0 50%">PVC</span></div>
<div class="t" style="left:511.50px;top:341px;height:14px;line-height:14px;font-size:12px;color:#000;"><span style="transform:scaleX(0.8625);transform-origin:0 50%">Menuiseries PVC</span></div>
<div class="t" style="left:616.00px;top:341px;height:14px;line-height:14px;font-size:12px;color:#000;"><span style="transform:scaleX(0.8643);transform-origin:0 50%">Dispo.</span></div>
<div class="t" style="left:861.70px;top:341px;height:14px;line-height:14px;font-size:12px;color:#000;"><span style="transform:scaleX(0.8906);transform-origin:0 50%">00:00:00</span></div>
<div class="cb" style="left:720px;top:341px"></div>
<div class="cb" style="left:765px;top:341px"></div><svg class="a" style="left:765px;top:341px" width="13" height="13"><path d="M2.8 6.5L5.3 9.5L10.5 3.3" fill="none" stroke="#3a3a3a" stroke-width="1.3"/></svg>
<div class="a" style="left:404px;top:356px;width:617px;height:16px;background:#f0f0f0"></div>
<div class="rh" style="top:356px;"></div>
<div class="gc" style="left:404px;top:356px;width:105px"></div>
<div class="gc" style="left:509px;top:356px;width:105px"></div>
<div class="gc" style="left:614px;top:356px;width:89px"></div>
<div class="gc" style="left:703px;top:356px;width:49px"></div>
<div class="gc" style="left:752px;top:356px;width:41px"></div>
<div class="gc" style="left:793px;top:356px;width:57px"></div>
<div class="gc" style="left:850px;top:356px;width:65px"></div>
<div class="gc" style="left:915px;top:356px;width:49px"></div>
<div class="gc" style="left:964px;top:356px;width:57px"></div>
<div class="t" style="left:406.20px;top:357px;height:14px;line-height:14px;font-size:12px;color:#000;"><span style="transform:scaleX(0.8600);transform-origin:0 50%">VR</span></div>
<div class="t" style="left:511.50px;top:357px;height:14px;line-height:14px;font-size:12px;color:#000;"><span style="transform:scaleX(0.8625);transform-origin:0 50%">Menuiseries VR</span></div>
<div class="t" style="left:616.00px;top:357px;height:14px;line-height:14px;font-size:12px;color:#000;"><span style="transform:scaleX(0.8643);transform-origin:0 50%">Dispo.</span></div>
<div class="t" style="left:861.70px;top:357px;height:14px;line-height:14px;font-size:12px;color:#000;"><span style="transform:scaleX(0.8906);transform-origin:0 50%">00:00:00</span></div>
<div class="cb" style="left:720px;top:357px"></div>
<div class="cb" style="left:765px;top:357px"></div><svg class="a" style="left:765px;top:357px" width="13" height="13"><path d="M2.8 6.5L5.3 9.5L10.5 3.3" fill="none" stroke="#3a3a3a" stroke-width="1.3"/></svg>
<div class="a" style="left:1020px;top:244px;width:1px;height:128px;background:#a6a6a6"></div>
<div class="a" style="left:371px;top:371px;width:650px;height:1px;background:#8c8c8c"></div>
<div class="a" style="left:507px;top:322px;width:108px;height:18px;border:2px solid #000"></div>
<div class="a" style="left:1110px;top:248px;width:280px;height:360px;border-left:1px solid #9a9a9a"></div><div class="a" style="left:1111px;top:248px;width:1px;height:360px;background:#f9f9f9"></div><div class="a" style="left:1104px;top:226px;width:1px;height:380px;background:#f9f9f9"></div>
<svg class="a" style="left:1108px;top:228px" width="281" height="22" viewBox="0 0 281 22"><path d="M2.5 20V19.5H5.5L15 2.5Q16.2 0.5 18.5 0.5H81Q84 0.5 85.5 3L95.7 19.5H281" fill="none" stroke="#959595"/><path d="M88.7 7.5L91.5 3Q93 0.5 96 0.5H185Q188 0.5 189.5 3L198 19.5" fill="none" stroke="#959595"/></svg>
<div class="t" style="left:1126.90px;top:231px;height:14px;line-height:14px;font-size:12px;font-weight:bold;color:#000;"><span style="letter-spacing:-0.115px;">Généralités</span></div>
<div class="t" style="left:1202.50px;top:231px;height:14px;line-height:14px;font-size:12px;color:#000;"><span style="transform:scaleX(0.8642);transform-origin:0 50%">Gestion Information</span></div>
<div class="a" style="left:1154.5px;top:253px;width:79.09999999999991px;height:16px;overflow:hidden">
<div class="t" style="left:0;top:1px;height:14px;line-height:14px;font-size:12px"><span style="transform:scaleX(.87);transform-origin:0 50%">Gamme Générique</span></div></div>
<div class="t" style="left:1258.60px;top:254px;height:14px;line-height:14px;font-size:12px;color:#000;"><span style="transform:scaleX(0.8455);transform-origin:0 50%">PRSPE</span></div>
<div class="t" style="left:942.20px;width:300px;text-align:right;top:273px;height:14px;line-height:14px;font-size:12px;color:#000;"><span style="transform:scaleX(0.8901);transform-origin:100% 50%">Etat</span></div>
<div class="t" style="left:1258.60px;top:273px;height:14px;line-height:14px;font-size:12px;color:#000;"><span style="transform:scaleX(0.8700);transform-origin:0 50%">V</span></div>
<div class="t" style="left:942.20px;width:300px;text-align:right;top:292px;height:14px;line-height:14px;font-size:12px;color:#000;"><span style="transform:scaleX(0.8789);transform-origin:100% 50%">Désignation</span></div>
<div class="t" style="left:1258.60px;top:292px;height:14px;line-height:14px;font-size:12px;color:#000;"><span style="transform:scaleX(0.8688);transform-origin:0 50%">Produits spécifiques</span></div>
<div class="t" style="left:942.20px;width:300px;text-align:right;top:311px;height:14px;line-height:14px;font-size:12px;color:#000;"><span style="transform:scaleX(0.8722);transform-origin:100% 50%">Désignation Courte</span></div>
<div class="t" style="left:1258.60px;top:311px;height:14px;line-height:14px;font-size:12px;color:#000;"><span style="transform:scaleX(0.8688);transform-origin:0 50%">Produits spécifiques</span></div>
<div class="t" style="left:942.20px;width:300px;text-align:right;top:330px;height:14px;line-height:14px;font-size:12px;color:#000;"><span style="transform:scaleX(0.8845);transform-origin:100% 50%">Mot Directeur</span></div>
<div class="t" style="left:942.20px;width:300px;text-align:right;top:351px;height:14px;line-height:14px;font-size:12px;color:#000;"><span style="transform:scaleX(0.8274);transform-origin:100% 50%">Famille</span></div>
<div class="ff" style="top:349.5px;height:17.5px"></div>
<div class="t" style="left:942.20px;width:300px;text-align:right;top:374px;height:14px;line-height:14px;font-size:12px;color:#000;"><span style="transform:scaleX(0.8383);transform-origin:100% 50%">Sous-Famille</span></div>
<div class="ff" style="top:370.5px;height:17.5px"></div>
<div class="t" style="left:942.20px;width:300px;text-align:right;top:395px;height:14px;line-height:14px;font-size:12px;color:#000;"><span style="transform:scaleX(0.8469);transform-origin:100% 50%">Commentaire</span></div>
<div class="a" style="left:1255px;top:392px;width:140px;height:77px;background:#f0f0f0;border:1px solid #fff;border-top-color:#6e6e6e;border-left-color:#6e6e6e;box-shadow:inset 1px 1px 0 #a8a8a8"></div>
<div class="a" style="left:1156px;top:474px;width:84.5px;height:16px;overflow:hidden">
<div class="t" style="left:0;top:1px;height:14px;line-height:14px;font-size:12px"><span style="transform:scaleX(.87);transform-origin:0 50%">Type Durée Etape</span></div></div>
<div class="ff" style="top:473px;height:19px"></div>
<div class="t" style="left:1259.00px;top:475px;height:14px;line-height:14px;font-size:12px;color:#7a7a7a;"><span style="transform:scaleX(0.8525);transform-origin:0 50%">[J] Jours Calendrier</span></div>
<div class="t" style="left:942.20px;width:300px;text-align:right;top:496px;height:14px;line-height:14px;font-size:12px;color:#000;"><span style="transform:scaleX(0.8838);transform-origin:100% 50%">Type Durée Figée</span></div>
<div class="a" style="left:1255px;top:497px;width:11px;height:10px;background:#fff;border:1px solid #cdcdcd"></div>
<div class="a" style="left:1140.5px;top:516px;width:94.5px;height:16px;overflow:hidden">
<div class="t" style="left:0;top:1px;height:14px;line-height:14px;font-size:12px"><span style="transform:scaleX(.87);transform-origin:0 50%">UME Temps / Défaut</span></div></div>
<div class="ff" style="top:515px;height:18px"></div>
<div class="t" style="left:942.20px;width:300px;text-align:right;top:538px;height:14px;line-height:14px;font-size:12px;color:#000;"><span style="transform:scaleX(0.9171);transform-origin:100% 50%">Quantité / Défaut</span></div>
<div class="t" style="left:1293.6px;top:538px;font-family:'Liberation Mono',monospace;font-size:11.4px;line-height:14px">1,000000</div>
<div class="t" style="left:942.20px;width:300px;text-align:right;top:559px;height:14px;line-height:14px;font-size:12px;color:#000;"><span style="transform:scaleX(0.9079);transform-origin:100% 50%">Re. Charge / Défaut</span></div>
<div class="ff" style="top:555.5px;height:20px"></div>
<div class="t" style="left:942.20px;width:300px;text-align:right;top:580px;height:14px;line-height:14px;font-size:12px;color:#000;"><span style="transform:scaleX(0.8674);transform-origin:100% 50%">Calendrier Local</span></div>
<div class="a" style="left:1386px;top:579px;width:4px;height:14px;background:#c9c9c9"></div>
<div class="a" style="left:819px;top:337px;width:3px;height:270px;background:linear-gradient(90deg,#5a5a5a,#9a9a9a 50%,#d8d8d8)"></div>
<div class="a" style="left:567px;top:334px;width:252px;height:272px;background:#f2f2f2;border:1px solid #c4c4c4;border-right-color:#8a8a8a"></div>
<div class="a" style="left:570px;top:498px;width:246px;height:22px;background:#91c9f7"></div>
<div class="a" style="left:598px;top:492px;width:146px;height:33.5px;background:#f29af2"></div>
<div class="a" style="left:598px;top:498px;width:146px;height:22px;background:#9299f4"></div>
<div class="a" style="left:598px;top:472px;width:218px;height:1px;background:#d4d4d4"></div>
<div class="a" style="left:598px;top:545px;width:218px;height:1px;background:#d4d4d4"></div>
<div class="a" style="left:598px;top:574px;width:218px;height:1px;background:#d4d4d4"></div>
<div class="t" style="left:602.30px;top:341px;height:14px;line-height:14px;font-size:12px;color:#000;"><span style="letter-spacing:-0.207px;">Création (F9)</span></div>
<div class="t" style="left:602.30px;top:363px;height:14px;line-height:14px;font-size:12px;color:#000;"><span style="letter-spacing:0.096px;">Modification (F1)</span></div>
<div class="t" style="left:602.30px;top:385px;height:14px;line-height:14px;font-size:12px;color:#000;"><span style="letter-spacing:0.052px;">Modification Globale (Maj+F1)</span></div>
<div class="t" style="left:602.30px;top:407px;height:14px;line-height:14px;font-size:12px;color:#000;"><span style="letter-spacing:-0.013px;">Duplication (F7)</span></div>
<div class="t" style="left:602.30px;top:429px;height:14px;line-height:14px;font-size:12px;color:#000;"><span style="letter-spacing:-0.296px;">Suppression (F6)</span></div>
<div class="t" style="left:602.30px;top:451px;height:14px;line-height:14px;font-size:12px;color:#000;"><span style="letter-spacing:-0.274px;">Détail (F8)</span></div>
<div class="t" style="left:602.30px;top:480px;height:14px;line-height:14px;font-size:12px;color:#000;"><span style="letter-spacing:-0.060px;">Accès Consultation Gamme</span></div>
<div class="t" style="left:602.30px;top:502px;height:14px;line-height:14px;font-size:12px;color:#000;"><span style="letter-spacing:-0.220px;">Accès Gestion Gamme</span></div>
<div class="t" style="left:602.30px;top:524px;height:14px;line-height:14px;font-size:12px;color:#7a7a7a;"><span style="letter-spacing:-0.132px;">Déblocage Gamme</span></div>
<div class="t" style="left:602.30px;top:553px;height:14px;line-height:14px;font-size:12px;color:#000;"><span style="letter-spacing:-0.356px;">Env. Requêtes</span></div>
<div class="t" style="left:602.30px;top:582px;height:14px;line-height:14px;font-size:12px;color:#000;"><span style="letter-spacing:-0.452px;">Test</span></div>
<svg class="a" style="left:802px;top:555px" width="6" height="10" viewBox="0 0 6 10"><path d="M1 0.8L5 5L1 9.2" fill="none" stroke="#444" stroke-width="1.1"/></svg>
<svg class="a" style="left:802px;top:584px" width="6" height="10" viewBox="0 0 6 10"><path d="M1 0.8L5 5L1 9.2" fill="none" stroke="#444" stroke-width="1.1"/></svg>
<svg class="a" style="left:675px;top:502.5px" width="14" height="21" viewBox="0 0 14 21"><path d="M0.7 0.8V17L4.2 13.6L6.9 19.2L9.2 18.2L6.6 12.6H11.8Z" fill="#ff99ff" stroke="#0a0a28" stroke-width="1"/></svg>
<div class="a" style="left:253px;top:393px;width:30px;height:30px;border-radius:50%;background:#fb0a0e;color:#fff;font-size:19px;line-height:30px;text-align:center">1</div>
<div class="a" style="left:747.5px;top:493.5px;width:30px;height:30px;border-radius:50%;background:#fb0a0e;color:#fff;font-size:19px;line-height:30px;text-align:center">2</div>
</body></html>
